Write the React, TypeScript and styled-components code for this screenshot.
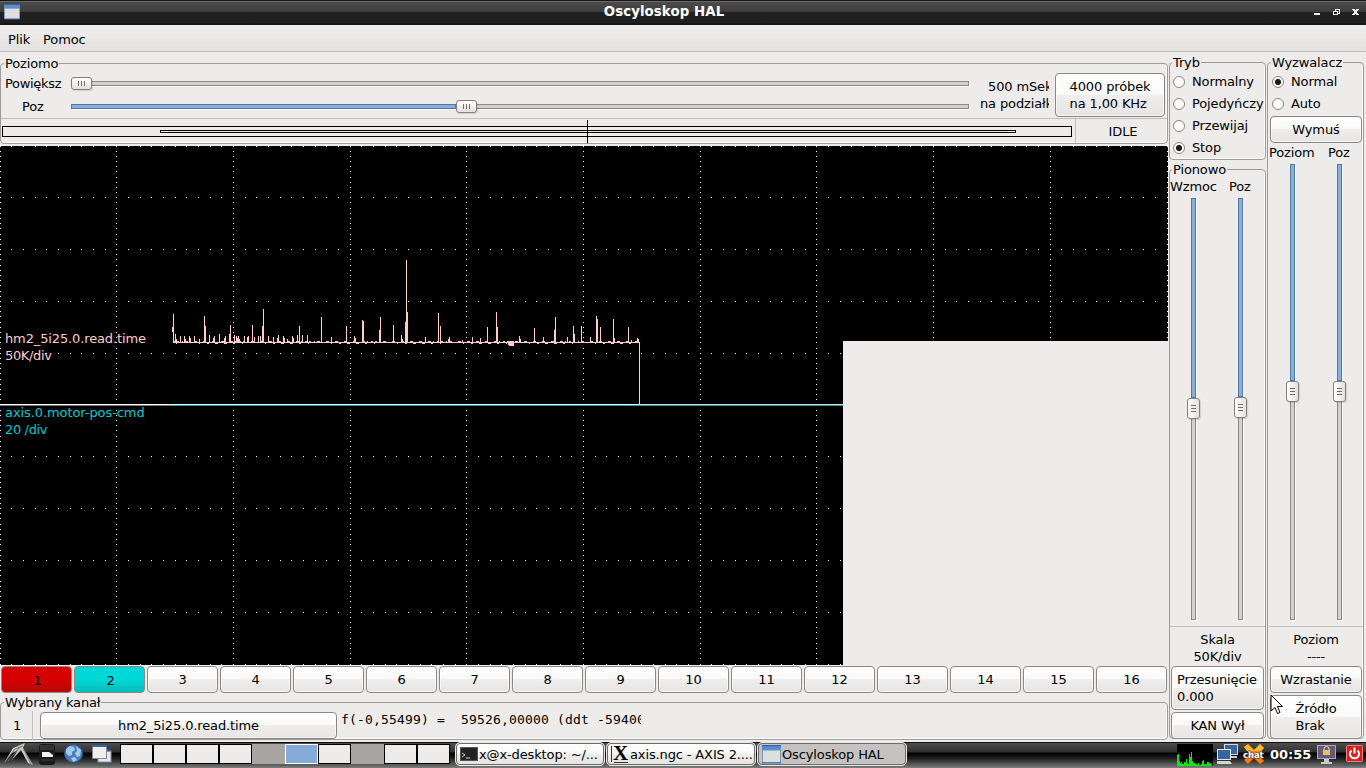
import { ReactNode } from "react";
import styled, { createGlobalStyle, css } from "styled-components";

const GlobalStyle = createGlobalStyle`
  * {
    box-sizing: border-box;
  }

  body {
    margin: 0;
    overflow: hidden;
    background: #edeceb;
    color: #000;
    font-family: "DejaVu Sans", sans-serif;
    font-size: 13px;
    line-height: 17px;
    letter-spacing: -0.13px;
    white-space: nowrap;
  }
`;

const Desktop = styled.div`
  display: flex;
  flex-direction: column;
  width: 1366px;
  height: 768px;
`;

const TitleBar = styled.header`
  display: grid;
  grid-template-columns: 60px 1fr 60px;
  align-items: center;
  height: 25px;
  padding: 0 7px 1px 4px;
  border-top: 1px solid #181416;
  border-bottom: 2px solid #171416;
  background: linear-gradient(#6a6a6a 0 1px, #4b4b4b 1px, #3c3c3c 11px, #212121 11px, #1f1f1f);
  color: #fff;

  h1 {
    margin: 0;
    padding-right: 35px;
    font-size: 13.33px;
    font-weight: bold;
    letter-spacing: 0.08px;
    text-align: center;
  }
`;

const WindowButtons = styled.div`
  display: flex;
  justify-content: flex-end;
`;

const MenuBar = styled.nav`
  display: flex;
  align-items: center;
  gap: 13px;
  height: 27px;
  padding: 3px 8px 0;
  border-bottom: 1px solid #bebdbb;
  background: linear-gradient(#efeeed, #e2e1df);
`;

const Body = styled.main`
  display: flex;
  gap: 1px;
  height: 690px;
`;

const LeftPane = styled.div`
  display: flex;
  flex-direction: column;
  width: 1168px;
  padding-top: 3px;
`;

const SideColumn = styled.div`
  display: flex;
  flex-direction: column;
  width: 97px;
  padding-top: 2px;

  fieldset legend {
    margin-left: 2px;
  }
`;

const Group = styled.fieldset<{ $height: number; $gap?: number; $indent?: number }>`
  display: flex;
  flex-direction: column;
  flex: none;
  min-width: 0;
  height: ${({ $height }) => $height}px;
  margin: 0 0 ${({ $gap = 0 }) => $gap}px;
  padding: 0 0 0 ${({ $indent = 0 }) => $indent}px;
  border: 1px solid #9d9c9a;
  border-radius: 4px;
  box-shadow: inset -1px -1px #fbfbfa;

  legend {
    height: 17px;
    margin-left: 3px;
    padding: 0 1px;
  }
`;

const buttonFace = css`
  border: 1px solid #8b8986;
  border-radius: 4px;
  background: linear-gradient(#fff, #f9f9f9 50%, #efeeed 50%, #e6e5e4);
  box-shadow: inset 0 0 0 1px rgba(255, 255, 255, 0.6);
`;

const Button = styled.button<{ $height?: number; $width?: number; $left?: boolean }>`
  ${buttonFace}
  flex: none;
  width: ${({ $width }) => ($width ? `${$width}px` : "auto")};
  height: ${({ $height = 27 }) => $height}px;
  padding: 0 5px;
  color: inherit;
  font: inherit;
  letter-spacing: inherit;
  text-align: ${({ $left }) => ($left ? "left" : "center")};

  > span {
    display: inline-block;
    text-align: left;
  }
`;

const HorizontalTop = styled.div`
  display: flex;
  height: 46px;
  margin-top: 1px;
  border-bottom: 1px solid #c1c0be;
`;

const Labels = styled.div`
  display: flex;
  flex-direction: column;
  gap: 6px;
  width: 70px;
  padding: 2px 0 0 4px;

  span:first-child {
    letter-spacing: -0.3px;
  }

  span:last-child {
    padding-left: 17px;
  }
`;

const HorizontalSliders = styled.div`
  display: flex;
  flex-direction: column;
  gap: 10px;
  width: 898px;
  padding-top: 4px;
`;

const TimeBase = styled.div`
  display: flex;
  flex-direction: column;
  align-items: flex-start;
  width: 69px;
  margin: 5px 6px 0 11px;
  overflow: hidden;

  span:first-child {
    padding-left: 8px;
  }
`;

const Track = styled.div<{ $vertical?: boolean; $size: number }>`
  position: relative;
  flex: none;
  width: ${({ $vertical, $size }) => ($vertical ? 5 : $size)}px;
  height: ${({ $vertical, $size }) => ($vertical ? $size : 5)}px;
  margin: ${({ $vertical }) => ($vertical ? "0" : "4px 0")};
  border: 1px solid #8b8986;
  background: #d3d2d0;
  box-shadow: 1px 1px #fafaf9;
`;

const Fill = styled.div<{ $vertical?: boolean; $length: number }>`
  width: ${({ $vertical, $length }) => ($vertical ? 5 : $length)}px;
  height: ${({ $vertical, $length }) => ($vertical ? $length : 5)}px;
  margin: -1px;
  border: 1px solid #5378a8;
  background: #8cafda;
`;

const Handle = styled.div<{ $vertical?: boolean; $at: number }>`
  position: absolute;
  display: flex;
  flex-direction: ${({ $vertical }) => ($vertical ? "column" : "row")};
  align-items: center;
  justify-content: center;
  gap: 2px;
  top: ${({ $vertical, $at }) => ($vertical ? $at : -5)}px;
  left: ${({ $vertical, $at }) => ($vertical ? -5 : $at)}px;
  width: ${({ $vertical }) => ($vertical ? 13 : 21)}px;
  height: ${({ $vertical }) => ($vertical ? 21 : 13)}px;
  border: 1px solid #83817e;
  border-radius: 3px;
  background: linear-gradient(${({ $vertical }) => ($vertical ? "90deg" : "180deg")}, #fff, #e2e1df);
  box-shadow: 1px 1px 1px rgba(0, 0, 0, 0.12);

  i {
    width: ${({ $vertical }) => ($vertical ? 5 : 1)}px;
    height: ${({ $vertical }) => ($vertical ? 1 : 5)}px;
    background: #706e6b;
  }
`;

const RecordRow = styled.div`
  display: flex;
  height: 24px;
`;

const RecordView = styled.div`
  width: 1075px;
  border-right: 1px solid #c1c0be;

  svg {
    display: block;
  }
`;

const Status = styled.span`
  flex: 1;
  padding: 4px 0 0 3px;
  text-align: center;
`;

const Scope = styled.svg`
  display: block;
  flex: none;
  margin-top: 2px;
  font-size: 13px;
  shape-rendering: crispEdges;
`;

const Channels = styled.div`
  display: flex;
  gap: 2px;
  padding: 1px 0 1px 1px;
`;

const ChannelButton = styled(Button)<{ $color?: string; $shade?: string }>`
  ${({ $color, $shade }) =>
    $color &&
    css`
      padding: 2px 4px 0 6px;
      background: linear-gradient(${$color}, ${$color} 50%, ${$shade});
      box-shadow: none;
    `}
`;

const SelectedRow = styled.div`
  display: flex;
  height: 29px;

  button {
    margin-top: 1px;
  }
`;

const SelectedNumber = styled.span`
  width: 32px;
  margin-right: 7px;
  padding: 6px 0 0 12px;
  border-right: 1px solid #c1c0be;
`;

const Readout = styled.pre`
  width: 300px;
  margin: 0 0 0 4px;
  overflow: hidden;
  font: 13px/17px "DejaVu Sans Mono", monospace;
  letter-spacing: 0.174px;
`;

const RadioRow = styled.label`
  display: flex;
  align-items: center;
  height: 22px;
  padding-left: 3px;
  gap: 7px;
`;

const RadioText = styled.span`
  padding-bottom: 2px;
`;

const Dot = styled.span<{ $on?: boolean }>`
  width: 12px;
  height: 12px;
  border: 1px solid #868482;
  border-radius: 50%;
  background: ${({ $on }) => ($on ? "radial-gradient(circle, #1c1c1c 0 2.6px, #fff 3.6px)" : "#fff")};
`;

const SliderHeads = styled.div`
  display: flex;

  span:first-child {
    width: 59px;
  }
`;

const SliderPair = styled.div`
  display: flex;
  gap: 42px;
  margin-top: 3px;
  padding-left: 21px;
`;

const Scale = styled.div`
  display: flex;
  flex-direction: column;
  align-items: center;
  height: 40px;
  margin-top: 6px;
  padding: 4px 0 0;
  border-top: 1px solid #c1c0be;
`;

const SideButtons = styled.div<{ $spaced?: boolean }>`
  display: flex;
  flex-direction: column;
  gap: 2px;
  padding: ${({ $spaced }) => ($spaced ? "1px 1px" : "0 1px")};
`;

const Taskbar = styled.footer`
  display: flex;
  align-items: flex-start;
  height: 26px;
  background: linear-gradient(#111 0 1px, #4d4d4d 1px, #303030 10px, #000 11px, #1c1c1c 16px, #686868 24px, #808080);
`;

const Launchers = styled.div`
  display: flex;
  width: 120px;
`;

const Pager = styled.div`
  display: flex;
  width: 335px;
  padding-top: 2px;
`;

const Workspace = styled.span<{ $state: string }>`
  width: 33px;
  height: 20px;
  border: 1px solid #000;
  background: #edeceb;

  ${({ $state }) =>
    $state === "empty" &&
    css`
      border-color: #a8a5a2;
      background: #a8a5a2;
    `}
  ${({ $state }) =>
    $state === "current" &&
    css`
      border-color: #fff;
      background: #86abd9;
    `}
`;

const Tasks = styled.div`
  display: flex;
  gap: 1px;
  width: 722px;
`;

const Task = styled.div<{ $active?: boolean }>`
  display: flex;
  align-items: center;
  width: 150px;
  height: 24px;
  padding: 0 0 0 4px;
  border: 1px solid #e8e7e5;
  border-radius: 5px;
  outline: 1px solid #6d6b69;
  outline-offset: -2px;
  background: ${({ $active }) =>
    $active ? "#c5c3c1" : "linear-gradient(#fff, #f8f8f8 50%, #ededec 50%, #e4e3e2)"};

  svg {
    flex: none;
    margin-right: 1px;
  }
`;

const Clock = styled.time`
  padding: 4px 0 0 3px;
  width: 50px;
  color: #fff;
  font-weight: bold;
  letter-spacing: 0;
`;

const Cursor = styled.svg`
  position: absolute;
  left: 1270px;
  top: 694px;
`;

interface SliderProps {
  vertical?: boolean;
  size: number;
  at: number;
}

const Slider = ({ vertical, size, at }: SliderProps) => (
  <Track $vertical={vertical} $size={size}>
    {at > 0 && <Fill $vertical={vertical} $length={at} />}
    <Handle $vertical={vertical} $at={at - 1}>
      <i />
      <i />
      <i />
    </Handle>
  </Track>
);

const Radio = ({ on, children }: { on?: boolean; children: ReactNode }) => (
  <RadioRow>
    <Dot $on={on} />
    <RadioText>{children}</RadioText>
  </RadioRow>
);

// [x, top] of every spike, in window pixels
const spikes = [
  [173, 314], [175, 334], [176, 339], [180, 336], [184, 336], [185, 339], [189, 336], [190, 338],
  [194, 336], [199, 339], [204, 316], [205, 326], [209, 335], [213, 338], [214, 336], [219, 334],
  [224, 338], [225, 336], [229, 334], [230, 325], [234, 335], [236, 336], [237, 338], [238, 336],
  [239, 339], [244, 336], [247, 337], [248, 336], [252, 325], [254, 337], [258, 336], [260, 336],
  [262, 326], [263, 309], [268, 336], [273, 337], [277, 338], [278, 335], [283, 336], [284, 338],
  [287, 339], [292, 336], [293, 338], [297, 335], [299, 326], [302, 335], [307, 335], [321, 317],
  [331, 337], [346, 326], [354, 336], [355, 338], [362, 320], [363, 321], [379, 330], [380, 317],
  [393, 325], [401, 335], [402, 339], [405, 322], [406, 260], [407, 312], [425, 337], [438, 313],
  [440, 326], [448, 339], [449, 337], [462, 340], [472, 337], [480, 338], [487, 327], [496, 312],
  [497, 327], [519, 336], [520, 339], [534, 328], [543, 337], [554, 330], [555, 317], [567, 337],
  [573, 326], [574, 334], [581, 326], [590, 337], [596, 316], [597, 319], [600, 327], [613, 319],
  [614, 338], [628, 327], [631, 340], [637, 338], [638, 339],
];

const noise = Array.from({ length: 465 }, (_, i) => {
  const r = (Math.floor(i / 2) * 7919 + Math.floor(i / 3) * 104) % 11;
  if (r < 4) return `M${173 + i} 341h1v1h-1z`;
  if (r < 6) return `M${173 + i} 343h1v1h-1z`;
  return "";
}).join("");

const gridDots = () => {
  let d = "";
  for (let col = 0; col <= 10; col++) {
    for (let j = 0; j <= 100; j++) {
      const y = Math.floor(146 + j * 5.18);
      if (y < 401 || y > 408) d += `M${Math.floor(col * 116.7)} ${y}h1v1h-1z`;
    }
  }
  for (let row = 0; row <= 10; row++) {
    if (row === 5) continue;
    for (let i = 0; i <= 100; i++) {
      d += `M${Math.floor(i * 11.67)} ${Math.floor(146 + row * 51.8)}h1v1h-1z`;
    }
  }
  return d;
};

const ScopeView = () => (
  <Scope width='1168' height='519' viewBox='0 146 1168 519'>
    <rect y='146' width='1168' height='519' />
    <path d={gridDots()} fill='#fff' />
    <rect y='404' width='640' height='1' fill='#fff' />
    <rect y='405' width='172' height='1' fill='#777' />
    <rect x='172' y='405' width='671' height='1' fill='#00a8a8' />
    <g fill='#ffcccc'>
      <rect x='640' y='404' width='203' height='1' />
      <rect x='172' y='327' width='1' height='5' />
      <rect x='173' y='342' width='467' height='1' />
      <rect x='639' y='342' width='1' height='63' />
      <path d='M508 341h6v5h-5v-1h-1z' />
      <path d={noise} />
      <path d={spikes.map(([x, y]) => `M${x} ${y}h1V343h-1z`).join("")} />
      <text x='5' y='343'>hm2_5i25.0.read.time</text>
      <text x='5' y='360' letterSpacing='-0.35'>50K/div</text>
    </g>
    <g fill='#00cccc'>
      <text x='5' y='417' letterSpacing='-0.08'>axis.0.motor-pos-cmd</text>
      <text x='5' y='434' letterSpacing='-0.35'>20 /div</text>
    </g>
    <rect x='843' y='341' width='325' height='324' fill='#edeceb' />
  </Scope>
);

const WindowIcon = ({ size = 16 }: { size?: number }) => (
  <svg width={size} height={size} viewBox='0 0 16 16'>
    <rect width='16' height='15.5' fill='#3465a4' />
    <rect y='1' width='16' height='3.5' fill='#5b8dcc' />
    <rect x='.5' y='4.5' width='15' height='10' fill='#dededc' />
  </svg>
);

const LauncherIcons = () => (
  <svg width='120' height='26' viewBox='0 742 120 26'>
    <path d='M4 763 13 748 25 743 23 748 33 765 28 763 21 750 11 761 18 750 12 753z' fill='#c8c8c6' />
    <path d='M5 762 15 749 23 746M8 761 20 747M23 748l8 16' stroke='#777' fill='none' />
    <rect x='39' y='744' width='16' height='21' rx='3' fill='#1b1b1b' />
    <path d='M40 745h14v5H40z' fill='#343434' />
    <path d='M42 752h7l4 3v2H42z' fill='#f2f2f2' />
    <path d='M41 760h12' stroke='#444' />
    <circle cx='73.5' cy='753.5' r='9' fill='#4a7fbe' stroke='#28568e' />
    <path d='M66 749l4-3 4 1 1 3-3 2v3l-3 1-3-3zM76 746l5 4-1 6-3 1-2-4 2-2zM71 758l4-1 2 3-4 2z' fill='#a7c9e9' />
    <rect x='98' y='751' width='13' height='11' fill='#e8e8e6' stroke='#7a98bd' />
    <path d='M98 750.5h13' stroke='#3465a4' strokeWidth='2' />
    <rect x='92.500' y='746.500' width='14' height='12' fill='#eeeeec' stroke='#888' />
    <path d='M92 746h15' stroke='#3465a4' strokeWidth='2' />
  </svg>
);

const loadBars = [
  11, 12, 5, 3, 4, 2, 2, 4, 3, 7, 3, 2, 12, 9, 14, 5, 3, 3, 2, 2, 1, 3, 1, 1, 2, 5, 6, 2, 1, 2, 4, 4, 2, 3, 1,
];

const LoadGraph = () => (
  <svg width='36' height='26' viewBox='0 0 36 26' shapeRendering='crispEdges'>
    <rect y='2' width='36' height='22' />
    <path d={loadBars.map((h, i) => `M${i} 24v-${h}h1v${h}z`).join("")} fill='#00f000' />
  </svg>
);

const TrayIcons = () => (
  <svg width='54' height='26' viewBox='1213 742 54 26'>
    <rect x='1224.500' y='744.500' width='13' height='10' fill='#3465a4' stroke='#d3d7cf' />
    <path d='M1229 756h8v2h-8z' fill='#c8cac6' />
    <rect x='1217.500' y='749.500' width='13' height='10' fill='#3465a4' stroke='#e4e6e2' />
    <path d='M1217 761h13l2 3h-15z' fill='#d3d7cf' />
    <path d='M1244 747l4-3 6 6 6-6 4 4-6 6 6 7-4 3-6-6-6 6-4-4 6-6z' fill='#f97b0d' />
    <path d='M1244 747l4-3 6 6 6-6 4 4-3 3h-14z' fill='#fbb829' />
    <text
      x='1243'
      y='758'
      fill='#fff'
      stroke='#333'
      strokeWidth='0.8'
      paintOrder='stroke'
      fontSize='8.5'
      fontWeight='bold'
      letterSpacing='-0.1'
    >
      chat
    </text>
  </svg>
);

const SessionIcons = () => (
  <svg width='46' height='26' viewBox='1317 742 46 26'>
    <rect x='1317.500' y='745.500' width='18' height='13' fill='#66587a' stroke='#aaa8b0' />
    <path d='M1324 750v-1a2.500 2.500 0 0 1 5 0v1' fill='none' stroke='#ddd' />
    <rect x='1323' y='750' width='7' height='5' fill='#e3c352' />
    <path d='M1324 759h5v3h3v2h-11v-2h3z' fill='#c9c9c9' />
    <rect x='1346.500' y='745.500' width='16' height='16' rx='1' fill='#d81e1e' stroke='#f08080' />
    <path d='M1351.500 750.500a4.500 4.500 0 1 0 6 0M1354.500 747.500v6' fill='none' stroke='#fff' strokeWidth='2' />
  </svg>
);

const TerminalIcon = () => (
  <svg width='18' height='16' viewBox='0 0 18 16'>
    <rect x='.5' y='1.500' width='17' height='13' fill='#222' stroke='#555' />
    <path d='M2 7l3 2-3 2M6 12h4' fill='none' stroke='#ccc' />
  </svg>
);

const AxisIcon = () => (
  <svg width='18' height='20' viewBox='1 0 18 20'>
    <path d='M1.500 2v16M4 18.500h14' stroke='#333' />
    <text x='3' y='15.500' fontFamily='Liberation Serif, serif' fontSize='21' fontWeight='bold'>
      X
    </text>
  </svg>
);

const workspaces = ["used", "used", "used", "used", "empty", "current", "used", "empty", "used", "used"];

const ChannelRow = () => (
  <Channels>
    <ChannelButton $width={71} $color='#d60000' $shade='#b80808'>1</ChannelButton>
    <ChannelButton $width={71} $color='#00d8d8' $shade='#08bcbc'>2</ChannelButton>
    {Array.from({ length: 14 }, (_, i) => (
      <ChannelButton key={i} $width={71}>
        {i + 3}
      </ChannelButton>
    ))}
  </Channels>
);

const HorizontalGroup = () => (
  <Group $height={89}>
    <legend>Poziomo</legend>
    <HorizontalTop>
      <Labels>
        <span>Powiększ</span>
        <span>Poz</span>
      </Labels>
      <HorizontalSliders>
        <Slider size={898} at={0} />
        <Slider size={898} at={385} />
      </HorizontalSliders>
      <TimeBase>
        <span>500 mSek</span>
        <span>na podziałkę</span>
      </TimeBase>
      <Button $width={110} $height={44}>
        <span>
          4000 próbek
          <br />
          na 1,00 KHz
        </span>
      </Button>
    </HorizontalTop>
    <RecordRow>
      <RecordView>
        <svg width='1073' height='24' viewBox='1 119 1073 24' fill='none' stroke='#000' shapeRendering='crispEdges'>
          <rect x='2.500' y='126.500' width='1069' height='10' />
          <rect x='160.500' y='130.500' width='855' height='2' />
          <path d='M587.500 120v23' />
        </svg>
      </RecordView>
      <Status>IDLE</Status>
    </RecordRow>
  </Group>
);

const App = () => (
  <Desktop>
    <GlobalStyle />
    <TitleBar>
      <WindowIcon />
      <h1>Oscyloskop HAL</h1>
      <WindowButtons>
        <svg width='46' height='8' viewBox='0 0 46 8' stroke='#eee' fill='none' shapeRendering='crispEdges'>
          <path d='M1 6h6' strokeWidth='2' />
          <path d='M22.500 3.500v-2h4v4h-2M20.500 3.500h4v3h-4z' />
          <path d='M40 1l5 6M45 1l-5 6' strokeWidth='2' />
        </svg>
      </WindowButtons>
    </TitleBar>
    <MenuBar>
      <span>Plik</span>
      <span>Pomoc</span>
    </MenuBar>
    <Body>
      <LeftPane>
        <HorizontalGroup />
        <ScopeView />
        <ChannelRow />
        <Group $height={46}>
          <legend>Wybrany kanał</legend>
          <SelectedRow>
            <SelectedNumber>1</SelectedNumber>
            <Button $width={297}>hm2_5i25.0.read.time</Button>
            <Readout>f(-0,55499) =  59526,00000 (ddt -59400</Readout>
          </SelectedRow>
        </Group>
      </LeftPane>
      <SideColumn>
        <Group $height={106} $gap={1}>
          <legend>Tryb</legend>
          <Radio>Normalny</Radio>
          <Radio>Pojedyńczy</Radio>
          <Radio>Przewijaj</Radio>
          <Radio on>Stop</Radio>
        </Group>
        <Group $height={578}>
          <legend>Pionowo</legend>
          <SliderHeads>
            <span>Wzmoc</span>
            <span>Poz</span>
          </SliderHeads>
          <SliderPair>
            <Slider vertical size={422} at={200} />
            <Slider vertical size={422} at={199} />
          </SliderPair>
          <Scale>
            <span>Skala</span>
            <span>50K/div</span>
          </Scale>
          <SideButtons>
            <Button $height={44} $left>
              Przesunięcie
              <br />
              0.000
            </Button>
            <Button>KAN Wył</Button>
          </SideButtons>
        </Group>
      </SideColumn>
      <SideColumn>
        <Group $height={685} $indent={1}>
          <legend>Wyzwalacz</legend>
          <Radio on>Normal</Radio>
          <Radio>Auto</Radio>
          <SideButtons $spaced>
            <Button>Wymuś</Button>
          </SideButtons>
          <SliderHeads>
            <span>Poziom</span>
            <span>Poz</span>
          </SliderHeads>
          <SliderPair>
            <Slider vertical size={456} at={217} />
            <Slider vertical size={456} at={217} />
          </SliderPair>
          <Scale>
            <span>Poziom</span>
            <span>----</span>
          </Scale>
          <SideButtons>
            <Button>Wzrastanie</Button>
            <Button $height={44}>
              <span>
                Źródło
                <br />
                Brak
              </span>
            </Button>
          </SideButtons>
        </Group>
      </SideColumn>
    </Body>
    <Taskbar>
      <Launchers>
        <LauncherIcons />
      </Launchers>
      <Pager>
        {workspaces.map((state, i) => (
          <Workspace key={i} $state={state} />
        ))}
      </Pager>
      <Tasks>
        <Task>
          <TerminalIcon />
          x@x-desktop: ~/...
        </Task>
        <Task>
          <AxisIcon />
          axis.ngc - AXIS 2....
        </Task>
        <Task $active>
          <WindowIcon size={19} />
          Oscyloskop HAL
        </Task>
      </Tasks>
      <LoadGraph />
      <TrayIcons />
      <Clock>00:55</Clock>
      <SessionIcons />
    </Taskbar>
    <Cursor width='14' height='21' viewBox='0 0 14 21'>
      <path d='M1 1v16l4-3.500 2.500 6 2.500-1-2.500-6h5z' fill='#fff' stroke='#000' />
    </Cursor>
  </Desktop>
);

export default App;
